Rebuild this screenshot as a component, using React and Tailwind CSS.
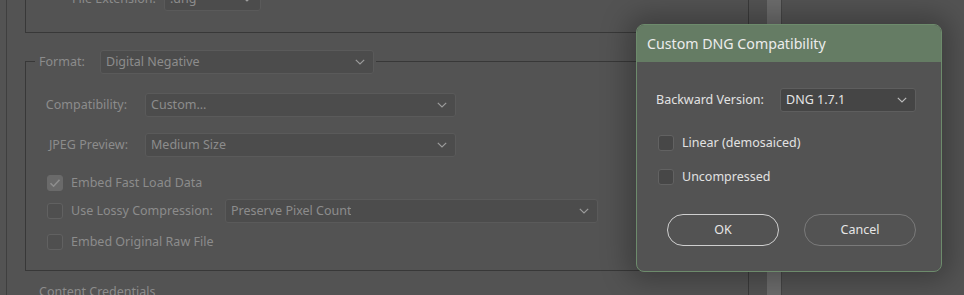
import React from "react";

const font = { fontFamily: '"Segoe UI", "Noto Sans", sans-serif' };

function Chevron({ color = "#9a9a9a" }) {
  return (
    <svg width="10" height="6" viewBox="0 0 10 6" className="shrink-0">
      <path d="M0.8 0.8 L5 5 L9.2 0.8" fill="none" stroke={color} strokeWidth="1.2" />
    </svg>
  );
}

function Select({ text, className = "", dark = false }) {
  return (
    <div
      className={`flex h-[24px] items-center justify-between rounded-[3px] border pl-[5px] pr-[8px] ${
        dark
          ? "border-[#5e5e5e] bg-[#454545] text-[#e4e4e4]"
          : "border-[#5a5a5a] bg-[#4c4c4c] text-[#8c8c8c]"
      } ${className}`}
    >
      <span className="truncate whitespace-nowrap">{text}</span>
      <Chevron color={dark ? "#b8b8b8" : "#9c9c9c"} />
    </div>
  );
}

function Check({ checked = false, dark = false }) {
  return (
    <div
      className={`flex h-[16px] w-[16px] shrink-0 items-center justify-center rounded-[3px] border ${
        dark
          ? "border-[#626262] bg-[#474747]"
          : checked
          ? "border-[#6a6a6a] bg-[#6a6a6a]"
          : "border-[#616161] bg-[#4f4f4f]"
      }`}
    >
      {checked && (
        <svg width="12" height="10" viewBox="0 0 12 10">
          <path d="M1.5 5.2 L4.6 8.2 L10.5 1.8" fill="none" stroke="#8e8e8e" strokeWidth="1.6" />
        </svg>
      )}
    </div>
  );
}

export default function App() {
  return (
    <div
      className="relative flex h-[295px] w-[964px] overflow-hidden whitespace-nowrap bg-[#535353] text-[12.5px] leading-[18px] text-[#8c8c8c]"
      style={font}
    >
      {/* left strip */}
      <div className="w-[7px] shrink-0 border-r border-[#3f3f3f]" />

      {/* main column */}
      <div className="flex w-[742px] shrink-0 flex-col border-r border-[#3a3a3a] pl-[18px]">
        {/* top group box */}
        <div className="h-[33px] shrink-0 border-b border-l border-[#383838]">
          <div className="mt-[-13px] flex items-center">
            <span className="ml-[46px] w-[92px]">File Extension:</span>
            <Select text=".dng" className="w-[97px]" />
          </div>
        </div>

        {/* format group */}
        <div className="mt-[17px] flex h-[24px] items-center">
          <div className="h-[13px] w-[10px] self-end border-l border-t border-[#383838]" />
          <span className="ml-[4px] w-[61px]">Format:</span>
          <Select text="Digital Negative" className="w-[274px]" />
          <div className="ml-[2px] h-[13px] flex-1 self-end border-t border-[#383838]" />
        </div>
        <div className="flex flex-col border-b border-l border-[#383838] pb-[20px] pl-[13px]">
          <div className="mt-[19px] flex items-center">
            <span className="w-[90px] pr-[2px] text-right">Compatibility:</span>
            <Select text="Custom..." className="ml-[16px] w-[311px]" />
          </div>
          <div className="mt-[16px] flex items-center">
            <span className="w-[90px] pr-[1px] text-right">JPEG Preview:</span>
            <Select text="Medium Size" className="ml-[16px] w-[311px]" />
          </div>
          <div className="ml-[8px] mt-[18px] flex h-[16px] items-center">
            <Check checked />
            <span className="ml-[8px]">Embed Fast Load Data</span>
          </div>
          <div className="ml-[8px] mt-[8px] flex h-[24px] items-center">
            <Check />
            <span className="ml-[8px] w-[154px]">Use Lossy Compression:</span>
            <Select text="Preserve Pixel Count" className="w-[373px]" />
          </div>
          <div className="ml-[8px] mt-[11px] flex h-[16px] items-center">
            <Check />
            <span className="ml-[8px]">Embed Original Raw File</span>
          </div>
        </div>
        <div className="ml-[14px] mt-[12px]">Content Credentials</div>
      </div>

      {/* scrollbar */}
      <div className="ml-[18px] w-[14px] shrink-0 bg-[#6c6c6c]" />
      <div className="flex-1 border-l border-[#454545] bg-[#535353]" />

      {/* dialog */}
      <div className="absolute left-[636px] top-[24px] flex h-[248px] w-[306px] flex-col overflow-hidden rounded-[8px] border border-[#6d8b6c] bg-[#535353] text-[#e2e2e2] shadow-[0_0_28px_8px_rgba(0,0,0,0.28)]">
        <div className="flex h-[37px] shrink-0 items-center bg-[#657c64] pl-[10px] text-[14.2px] text-[#ececec]">
          Custom DNG Compatibility
        </div>
        <div className="flex flex-col pl-[19px]">
          <div className="mt-[26px] flex items-center">
            <span className="w-[124px]">Backward Version:</span>
            <Select text="DNG 1.7.1" dark className="w-[136px]" />
          </div>
          <div className="ml-[2px] mt-[23px] flex h-[16px] items-center">
            <Check dark />
            <span className="ml-[8px]">Linear (demosaiced)</span>
          </div>
          <div className="ml-[2px] mt-[18px] flex h-[16px] items-center">
            <Check dark />
            <span className="ml-[8px]">Uncompressed</span>
          </div>
          <div className="ml-[11px] mt-[29px] flex gap-[25px]">
            <button className="flex h-[32px] w-[112px] items-center justify-center rounded-full border-[1.5px] border-[#cfcfcf] text-[#e6e6e6]">
              OK
            </button>
            <button className="flex h-[32px] w-[112px] items-center justify-center rounded-full border border-[#7a7a7a] text-[#e6e6e6]">
              Cancel
            </button>
          </div>
        </div>
      </div>
    </div>
  );
}
